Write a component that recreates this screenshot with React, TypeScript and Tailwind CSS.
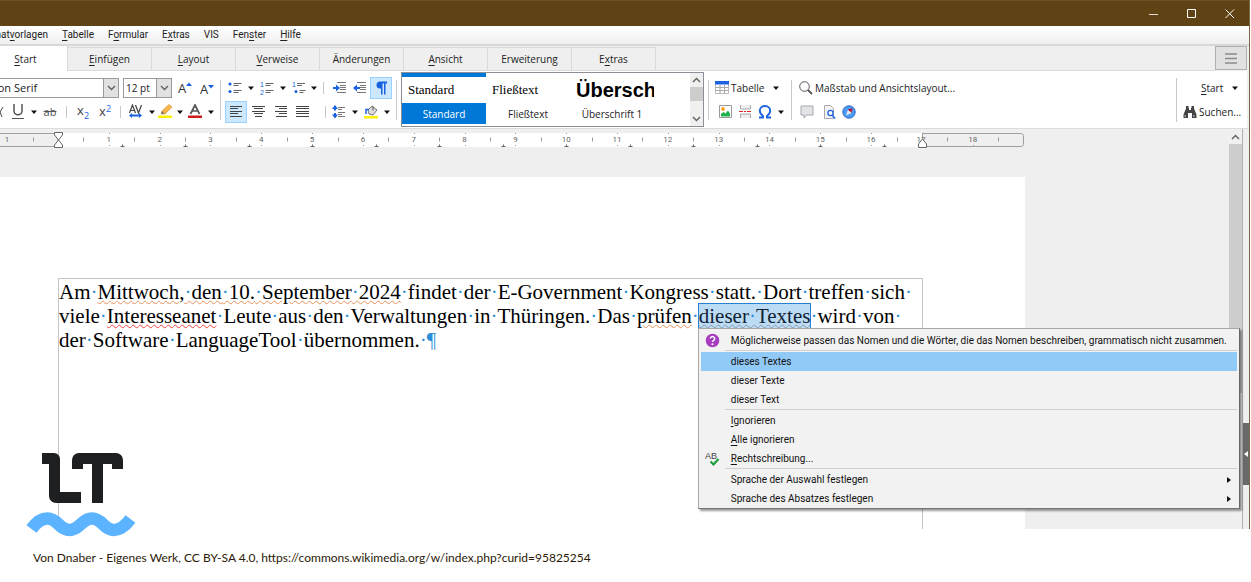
import React from 'react'
import clsx from 'clsx'

const MENU_ITEMS = ['&Tabelle', 'F&ormular', 'E&xtras', 'VIS', 'Fen&ster', '&Hilfe']

const TABS = ['&Start', '&Einfügen', '&Layout', '&Verweise', 'Änderungen', '&Ansicht', 'Erweiterung', 'E&xtras']

const CM = 50.82
const RULER_ZERO = 58

// Underlines the letter that follows the ampersand
function Mnemonic({ text }: { text: string }) {
  const at = text.indexOf('&')
  if (at < 0) return <>{text}</>
  return (
    <>
      {text.slice(0, at)}
      <span className="underline underline-offset-2">{text[at + 1]}</span>
      {text.slice(at + 2)}
    </>
  )
}

interface ToolProps {
  label: string
  className?: string
  active?: boolean
  children?: React.ReactNode
}

function Tool({ label, className = 'w-5', active, children }: ToolProps) {
  return (
    <button
      type="button"
      aria-label={label}
      className={clsx(
        'flex h-[22px] shrink-0 items-center justify-center',
        active && 'border border-[#99d1ff] bg-[#cce8ff]',
        className
      )}
    >
      {children}
    </button>
  )
}

function Caret({ className = 'w-3' }: { className?: string }) {
  return (
    <button type="button" aria-label="Mehr" className={clsx('flex h-[22px] shrink-0 items-center justify-center', className)}>
      <svg width="6" height="4" viewBox="0 0 6 4">
        <path d="M0 0.5h6L3 4z" fill="#111" />
      </svg>
    </button>
  )
}

function Divider({ className = 'h-14' }: { className?: string }) {
  return <div className={clsx('w-px shrink-0 bg-[#c8c8c8]', className)} />
}

function Chevron({ up }: { up?: boolean }) {
  return (
    <svg width="9" height="6" viewBox="0 0 9 6" fill="none" stroke="#606060" strokeWidth="1.4">
      <path d={up ? 'M1 5l3.5-3.5L8 5' : 'M1 1l3.5 3.5L8 1'} />
    </svg>
  )
}

function ListIcon({ kind }: { kind: 'bullet' | 'number' | 'outline' }) {
  return (
    <svg width="14" height="14" viewBox="0 0 14 14">
      {kind === 'bullet' && (
        <g fill="#1b62e0">
          <circle cx="2" cy="3" r="1.6" />
          <circle cx="2" cy="10.5" r="1.6" />
        </g>
      )}
      {kind === 'number' && (
        <g fill="#1b62e0" fontFamily="Liberation Sans" fontSize="7">
          <text x="0" y="6">1</text>
          <text x="0" y="13.5">2</text>
        </g>
      )}
      {kind === 'outline' && (
        <g fill="#1b62e0" fontFamily="Liberation Sans" fontSize="7">
          <text x="0" y="6">1</text>
          <circle cx="4" cy="10.5" r="1.5" />
        </g>
      )}
      <path
        d={kind === 'outline' ? 'M5 2.500h8M5 4.500h5M7.500 9.500h6M7.500 11.500h4' : 'M5.500 2.500h8M5.500 4.500h5M5.500 9.500h8M5.500 11.500h5'}
        stroke="#666"
        strokeWidth="1"
      />
    </svg>
  )
}

function IndentIcon({ flip }: { flip?: boolean }) {
  return (
    <svg width="14" height="12" viewBox="0 0 14 12">
      <path d="M4 0.500h9M7 3.500h6M7 5.500h6M7 7.500h6M4 10.500h9" stroke="#777" />
      <path d={flip ? 'M0 6l4-3.500v2.500h3v2h-3v2.500z' : 'M7 6L3 2.500V5H0v2h3v2.500z'} fill="#1b62e0" />
    </svg>
  )
}

function AlignIcon({ d }: { d: string }) {
  return (
    <svg width="13" height="12" viewBox="0 0 13 12" stroke="#444">
      <path d={d} />
    </svg>
  )
}

function FontGroup() {
  return (
    <div className="flex w-[220px] shrink-0 flex-col gap-[2px] overflow-hidden">
      <div className="flex h-[22px] items-center">
        <div className="relative -ml-12 w-[167px] shrink-0">
          <select
            aria-label="Schriftart"
            className="block h-5 w-full appearance-none border border-[#9a9a9a] bg-white pl-1.5 text-[11px] leading-4 text-[#222]"
          >
            <option>Liberation Serif</option>
          </select>
          <span className="pointer-events-none absolute inset-y-0 right-0 flex w-4 items-center justify-center border border-[#9a9a9a] bg-[#e1e1e1]">
            <Chevron />
          </span>
        </div>
        <div className="relative ml-1 w-[49px] shrink-0">
          <select
            aria-label="Schriftgröße"
            className="block h-5 w-full appearance-none border border-[#9a9a9a] bg-white pl-0.5 text-[10px] leading-4 text-[#222]"
          >
            <option>12 pt</option>
          </select>
          <span className="pointer-events-none absolute inset-y-0 right-0 flex w-4 items-center justify-center border border-[#9a9a9a] bg-[#e1e1e1]">
            <Chevron />
          </span>
        </div>
        <Tool label="Schrift vergrößern" className="ml-0.5 w-[22px]">
          <svg width="15" height="20" viewBox="0 0 15 20">
            <text x="0" y="15" fontFamily="Open Sans" fontSize="13" fill="#333">A</text>
            <path d="M8 8l3-3.500 3 3.500z" fill="#1b62e0" />
          </svg>
        </Tool>
        <Tool label="Schrift verkleinern" className="w-[22px]">
          <svg width="15" height="20" viewBox="0 0 15 20">
            <text x="0" y="16" fontFamily="Open Sans" fontSize="13" fill="#333">A</text>
            <path d="M8 7l3 3.500 3-3.500z" fill="#1b62e0" />
          </svg>
        </Tool>
      </div>
      <div className="flex h-[22px] items-center">
        <Tool label="Kursiv" className="w-2">
          <svg width="8" height="12" viewBox="0 0 8 12" fill="none" stroke="#444">
            <path d="M3 1L0 6l2 5M0 1" />
          </svg>
        </Tool>
        <Tool label="Unterstreichen">
          <svg width="12" height="15" viewBox="0 0 12 15" fill="none" stroke="#555">
            <path d="M2 0v7a4 3.800 0 0 0 8 0V0" strokeWidth="1.500" />
            <path d="M0 14.500h12" />
          </svg>
        </Tool>
        <Caret />
        <Tool label="Durchstreichen">
          <span className="text-[11px] leading-4 text-[#555] line-through">ab</span>
        </Tool>
        <Divider className="mx-1.5 h-3" />
        <Tool label="Tiefgestellt" className="w-[22px]">
          <svg width="14" height="20" viewBox="0 0 14 20" fontFamily="Open Sans">
            <text x="0" y="13" fontSize="13" fill="#444">x</text>
            <text x="7" y="17" fontSize="9" fill="#1b62e0">2</text>
          </svg>
        </Tool>
        <Tool label="Hochgestellt" className="w-[22px]">
          <svg width="14" height="20" viewBox="0 0 14 20" fontFamily="Open Sans">
            <text x="0" y="14" fontSize="13" fill="#444">x</text>
            <text x="7" y="10" fontSize="9" fill="#1b62e0">2</text>
          </svg>
        </Tool>
        <Divider className="ml-[3px] mr-1 h-3" />
        <Tool label="Zeichenabstand" className="w-[22px]">
          <svg width="15" height="15" viewBox="0 0 15 15">
            <path d="M0.500 9L3.500 1L6.500 9M1.500 6.500h4M6.500 1l3 8 3-8" fill="none" stroke="#444" strokeWidth="1.200" />
            <path d="M0 11.500l3-2.500v1.500h7V9l3 2.500-3 2.500v-1.500H3V14z" fill="#1b62e0" />
          </svg>
        </Tool>
        <Caret className="w-2.5" />
        <Tool label="Texthervorhebung" className="w-[18px]">
          <svg width="16" height="15" viewBox="0 0 16 15">
            <path d="M3 10l1-3 7-6.500 3 2.500-7 7z" fill="#f7b64b" stroke="#d58a1c" strokeWidth="0.600" />
            <path d="M3 10l1-3 2.500 2.500z" fill="#777" />
            <path d="M0 11.500h14v2.500H0z" fill="#fbf005" />
          </svg>
        </Tool>
        <Caret className="w-2.5" />
        <Tool label="Schriftfarbe">
          <svg width="16" height="15" viewBox="0 0 16 15">
            <path d="M3.500 10L8 1l4.500 9M5 7h6" fill="none" stroke="#555" strokeWidth="1.700" />
            <path d="M1 11.500h14v2.500H1z" fill="#cc1c1c" />
          </svg>
        </Tool>
        <Caret />
      </div>
    </div>
  )
}

function ParagraphGroup() {
  return (
    <div className="flex w-[175px] shrink-0 flex-col gap-[2px] pl-1">
      <div className="flex h-[22px] items-center">
        <Tool label="Aufzählung"><ListIcon kind="bullet" /></Tool>
        <Caret />
        <Tool label="Nummerierung"><ListIcon kind="number" /></Tool>
        <Caret />
        <Tool label="Gliederung"><ListIcon kind="outline" /></Tool>
        <Caret className="w-2.5" />
        <Divider className="ml-1 mr-1.5 h-3" />
        <Tool label="Einzug vergrößern"><IndentIcon /></Tool>
        <Tool label="Einzug verkleinern"><IndentIcon flip /></Tool>
        <Tool label="Formatierungszeichen" active className="w-[22px]">
          <svg width="12" height="14" viewBox="0 0 12 14">
            <path d="M5 0.500h7v2h-1.500V13.500h-1.500V2.500h-1.500V13.500H6V7.500H5a3.500 3.500 0 0 1 0-7z" fill="#1b62e0" />
          </svg>
        </Tool>
      </div>
      <div className="flex h-[22px] items-center">
        <Tool label="Linksbündig" active className="w-[22px]"><AlignIcon d="M0 .5h12M0 2.500h8M0 5.500h12M0 7.500h8M0 10.500h12" /></Tool>
        <Tool label="Zentriert" className="w-[22px]"><AlignIcon d="M0 .5h13M2 2.500h9M0 5.500h13M2 7.500h9M3 10.500h7" /></Tool>
        <Tool label="Rechtsbündig" className="w-[22px]"><AlignIcon d="M1 .5h12M5 2.500h8M1 5.500h12M5 7.500h8M2 10.500h11" /></Tool>
        <Tool label="Blocksatz" className="w-[22px]"><AlignIcon d="M0 .5h13M0 2.500h13M0 5.500h13M0 7.500h13M0 10.500h13" /></Tool>
        <Divider className="ml-3 mr-[3px] h-3" />
        <Tool label="Zeilenabstand">
          <svg width="14" height="14" viewBox="0 0 14 14">
            <path d="M3 0l3 4H4v1.500H2V4H0zM3 13.500l3-4H4V8H2v1.500H0z" fill="#1b62e0" />
            <path d="M6 2.500h7M6 4.500h4M6 7.500h7M6 9.500h4M6 11.500h7" stroke="#777" />
          </svg>
        </Tool>
        <Caret />
        <Tool label="Hintergrundfarbe">
          <svg width="15" height="14" viewBox="0 0 15 14">
            <path d="M4 5l4-4 5 4-4 5-4-1z" fill="#ddd" stroke="#777" />
            <path d="M2 9V4.500h3" fill="none" stroke="#1b62e0" strokeWidth="1.500" />
            <path d="M9 1.500v4" stroke="#555" />
            <path d="M0 11h14v2.500H0z" fill="#fbf005" />
          </svg>
        </Tool>
        <Caret />
      </div>
    </div>
  )
}

function StyleGallery() {
  return (
    <div className="ml-1 flex h-[55px] w-[303px] shrink-0 border border-[#8a8f98] bg-white">
      <button type="button" className="flex w-[84px] shrink-0 flex-col border-t-4 border-[#0078d7] text-left">
        <span className="flex h-[26px] w-full items-center pl-1.5 font-['Liberation_Serif',serif] text-[13px] text-black">Standard</span>
        <span className="flex h-[21px] w-full items-center justify-center bg-[#0078d7] text-white">Standard</span>
      </button>
      <button type="button" className="flex w-[84px] shrink-0 flex-col pt-1 text-left">
        <span className="flex h-[26px] w-full items-center pl-1.5 font-['Liberation_Serif',serif] text-[13px] text-black">Fließtext</span>
        <span className="flex h-[21px] w-full items-center justify-center">Fließtext</span>
      </button>
      <button type="button" className="flex w-[84px] shrink-0 flex-col pt-1 text-left">
        <span className="flex h-[26px] w-full items-center overflow-hidden pl-1.5 font-['Liberation_Sans',sans-serif] text-[20px] font-bold text-black">
          Übersch
        </span>
        <span className="flex h-[21px] w-full items-center justify-center">Überschrift 1</span>
      </button>
      <div className="ml-auto flex w-[13px] flex-col items-center bg-[#f0f0f0]">
        <span className="flex h-3.5 items-center"><Chevron up /></span>
        <span className="h-3.5 w-full bg-[#cdcdcd]" />
        <span className="mt-auto flex h-3.5 items-center"><Chevron /></span>
      </div>
    </div>
  )
}

function InsertGroup() {
  return (
    <div className="flex w-[82px] shrink-0 flex-col gap-[2px] pl-1.5">
      <div className="flex h-[22px] items-center">
        <button type="button" className="flex items-center gap-0.5">
          <svg width="14" height="13" viewBox="0 0 14 13">
            <path d="M0.500 0.500h13v12h-13z" fill="#fff" stroke="#bbb" />
            <path d="M0 0h14v3.500H0z" fill="#1b62e0" />
            <path d="M0 6.500h14M0 9.500h14M5 3.500V13M9.500 3.500V13" stroke="#aaa" />
          </svg>
          Tabelle
        </button>
        <Caret className="ml-auto mr-3" />
      </div>
      <div className="flex h-[22px] items-center">
        <Tool label="Bild">
          <svg width="13" height="13" viewBox="0 0 13 13">
            <path d="M0.500 0.500h12v12h-12z" fill="#fff" stroke="#999" />
            <circle cx="4" cy="4" r="1.900" fill="#f5a623" />
            <path d="M2 11.500V9l2.500-2 2 1.500L9 5.500l2 3v3z" fill="#1eb14b" />
          </svg>
        </Tool>
        <Tool label="Seitenumbruch">
          <svg width="13" height="13" viewBox="0 0 13 13">
            <path d="M1.500 0v4h10V0M1.500 13V9h10v4" fill="#eee" stroke="#aaa" />
            <path d="M0 6.500h13" stroke="#d22" strokeDasharray="4 1 2 1" />
          </svg>
        </Tool>
        <Tool label="Sonderzeichen">
          <svg width="14" height="14" viewBox="0 0 14 14">
            <path d="M1 12.500h4v-1.500C3 9.500 1.800 8 1.800 5.800a5.200 4.800 0 0 1 10.400 0C12.200 8 11 9.500 9 11v1.500h4" fill="none" stroke="#1b62e0" strokeWidth="1.900" />
          </svg>
        </Tool>
        <Caret />
      </div>
    </div>
  )
}

function ViewGroup() {
  return (
    <div className="flex shrink-0 flex-col gap-[2px] pl-[7px]">
      <div className="flex h-[22px] items-center">
        <button type="button" className="flex items-center gap-0.5">
          <svg width="14" height="14" viewBox="0 0 14 14" fill="none" stroke="#555">
            <circle cx="5.500" cy="5.500" r="4.800" />
            <path d="M9 9l4 4" strokeWidth="1.800" />
          </svg>
          Maßstab und Ansichtslayout...
        </button>
      </div>
      <div className="flex h-[22px] items-center">
        <Tool label="Kommentar" className="w-4">
          <svg width="14" height="14" viewBox="0 0 14 14">
            <path d="M1 1h12v9H6.500L4 13v-3H1z" fill="#e3e4e8" stroke="#a6a8ad" strokeLinejoin="round" />
          </svg>
        </Tool>
        <Tool label="Druckvorschau" className="ml-1 w-5">
          <svg width="13" height="14" viewBox="0 0 13 14">
            <path d="M1.500 0.500h6l3 3v10h-9z" fill="#f2f2f4" stroke="#aaa" />
            <circle cx="7.500" cy="8" r="2.600" fill="#fff" stroke="#1b62e0" strokeWidth="1.300" />
            <path d="M9.500 10.500l2.500 3" stroke="#1b62e0" strokeWidth="1.600" />
          </svg>
        </Tool>
        <Tool label="Navigator">
          <svg width="14" height="14" viewBox="0 0 14 14">
            <circle cx="7" cy="7" r="6.200" fill="#4d9bf5" stroke="#2a66c4" />
            <path d="M10.500 3.500L9.500 8 6 4.500z" fill="#d01f2e" />
            <path d="M6 4.500L9.500 8 4 10.500z" fill="#e8e8ec" />
            <path d="M10.500 3.500L6 4.500l1.700 1.700z" fill="#a3122a" />
          </svg>
        </Tool>
      </div>
    </div>
  )
}

function SearchGroup() {
  return (
    <div className="flex w-[70px] shrink-0 flex-col gap-[2px] pl-1.5">
      <div className="flex h-[22px] items-center pl-[18px]">
        <button type="button"><Mnemonic text="&Start" /></button>
        <Caret className="ml-auto w-6" />
      </div>
      <div className="flex h-[22px] items-center">
        <button type="button" className="flex items-center gap-0.5">
          <svg width="14" height="12" viewBox="0 0 14 12" fill="#444">
            <path d="M3 0h2.500v2H6v2h2V2h.5V0H11v2.500l2.500 6V12H9V7H5v5H.5V8.500l2.500-6z" />
            <path d="M1.500 9h1.500v2H1.500zM10 9h1.500v2H10z" fill="#999" />
          </svg>
          Suchen...
        </button>
      </div>
    </div>
  )
}

function Ruler() {
  const cms = Array.from({ length: 18 }, (_, i) => i + 1)
  return (
    <svg className="block" width="1026" height="17" viewBox="0 0 1026 17" role="img" aria-label="Lineal">
      <path d="M0 1h1024v14H0z" fill="#fff" />
      <path d="M-2 1.500h60v13H-2zM922.500 1.500h99a2 2 0 0 1 2 2v9a2 2 0 0 1-2 2h-99z" fill="#efefef" stroke="#a0a0a0" />
      <g fontFamily="Roboto" fontSize="8" fill="#666" textAnchor="middle">
        <text x="7" y="10">1</text>
        {cms.map((n) => (
          <text key={n} x={RULER_ZERO + n * CM - (n === 17 ? 1 : 0)} y="10">{n}</text>
        ))}
      </g>
      <g stroke="#999">
        <path d="M33.500 5.500v4" />
        {cms.map((n) => (
          <path key={n} d={`M${Math.round(RULER_ZERO + (n - 0.5) * CM) + 0.5} 5.500v4`} />
        ))}
        <path d={`M${Math.round(RULER_ZERO + 18.5 * CM) + 0.5} 5.500v4`} />
        {cms.map((n) => (
          <path key={n} d={`M${Math.round(RULER_ZERO + n * CM) + 0.5} 1v1m0 11v1`} />
        ))}
      </g>
      <g stroke="#666">
        {Array.from({ length: 13 }, (_, i) => Math.round(RULER_ZERO + (i + 1) * 63.5)).map((x) => (
          <path key={x} d={`M${x + 0.5} 12.500v2M${x - 1.5} 14.500h4`} />
        ))}
      </g>
      <g fill="#fff" stroke="#666">
        <path d="M54.500 0.500h8v2.500l-4 5-4-5zM58.500 8l4 5v2.500h-8V13z" />
        <path d="M922.500 7l4 5v3.500h-8V12z" />
      </g>
    </svg>
  )
}

// Words are separated by visible space marks
function Marked({ children }: { children: string }) {
  return (
    <>
      {children.split(' ').map((word, i) => (
        <React.Fragment key={i}>
          {i > 0 && <span className="text-[#2a8fd8]">·</span>}
          {word}
        </React.Fragment>
      ))}
    </>
  )
}

const STYLE_HINT = 'underline decoration-[#e5905a] decoration-wavy decoration-1 underline-offset-1'

interface MenuRowProps {
  label: string
  icon?: React.ReactNode
  selected?: boolean
  submenu?: boolean
}

function MenuRow({ label, icon, selected, submenu }: MenuRowProps) {
  return (
    <li role="none" className={clsx('flex h-[19px] items-center', selected && 'bg-[#91c9f7]')}>
      <button type="button" role="menuitem" className="flex h-full w-full items-center text-left">
        <span className="flex w-[30px] shrink-0 justify-start pl-1">{icon}</span>
        <span className="flex-1 whitespace-nowrap"><Mnemonic text={label} /></span>
        {submenu && (
          <svg className="mr-1.5" width="4" height="6" viewBox="0 0 4 6">
            <path d="M0 0l4 3-4 3z" fill="#111" />
          </svg>
        )}
      </button>
    </li>
  )
}

function MenuSeparator() {
  return <li role="separator" className="ml-6 h-0.5 border-t border-[#d0d0d0]" />
}

function ContextMenu() {
  return (
    <ul
      role="menu"
      className="absolute top-full -left-px z-10 w-[542px] border border-[#a8a8a8] border-r-[#666] border-b-[#777] bg-[#f2f2f2] px-0.5 pt-0.5 font-['Roboto',sans-serif] text-[10px] leading-4 text-[#111] shadow-[2px_2px_2px_rgba(0,0,0,0.4)]"
    >
      <MenuRow
        label="Möglicherweise passen das Nomen und die Wörter, die das Nomen beschreiben, grammatisch nicht zusammen."
        icon={
          <svg width="15" height="15" viewBox="0 0 15 15">
            <circle cx="7.500" cy="7.500" r="6.800" fill="#a83cc0" />
            <path d="M5.300 5.600a2.200 2 0 1 1 3.400 1.700c-.9.600-1.200.9-1.200 1.800" fill="none" stroke="#fff" strokeWidth="1.500" />
            <circle cx="7.500" cy="11.200" r="1" fill="#fff" />
          </svg>
        }
      />
      <MenuSeparator />
      <MenuRow label="dieses Textes" selected />
      <MenuRow label="dieser Texte" />
      <MenuRow label="dieser Text" />
      <MenuSeparator />
      <MenuRow label="&Ignorieren" />
      <MenuRow label="&Alle ignorieren" />
      <MenuRow
        label="&Rechtschreibung..."
        icon={
          <svg width="15" height="17" viewBox="0 0 15 17">
            <text x="0" y="9" fontFamily="Liberation Sans" fontSize="9" fill="#444">AB</text>
            <path d="M5.500 11.500l3 3 5-5.500" fill="none" stroke="#1e9e3c" strokeWidth="2.200" />
          </svg>
        }
      />
      <MenuSeparator />
      <MenuRow label="Sprache der Auswahl festlegen" submenu />
      <MenuRow label="Sprache des Absatzes festlegen" submenu />
    </ul>
  )
}

function DocumentText() {
  return (
    <div className="whitespace-nowrap pt-px font-['Liberation_Serif',serif] text-[21px] leading-[24px] text-black">
      <div>
        <Marked>Am </Marked>
        <span className={STYLE_HINT}><Marked>Mittwoch, den 10. September 2024</Marked></span>
        <Marked> findet der E-Government Kongress statt. Dort treffen sich </Marked>
      </div>
      <div>
        <Marked>viele </Marked>
        <span className="underline decoration-[#f04040] decoration-wavy decoration-1 underline-offset-1">Interesseanet</span>
        <Marked> Leute aus den Verwaltungen in Thüringen. Das </Marked>
        <span className={STYLE_HINT}>prüfen</span>
        <Marked> </Marked>
        <span className="relative inline-block bg-[#bcdcf5] text-[#123] outline outline-[#2a80d0]">
          <span className="underline decoration-[#8a9aa8] decoration-wavy decoration-1 underline-offset-1">
            <Marked>dieser Textes</Marked>
          </span>
          <ContextMenu />
        </span>
        <Marked> wird von </Marked>
      </div>
      <div>
        <Marked>der Software LanguageTool übernommen. </Marked>
        <span className="text-[#2a8fd8]">¶</span>
      </div>
    </div>
  )
}

function Logo() {
  return (
    <svg className="absolute -top-[77px] left-[26px]" width="110" height="86" viewBox="0 0 110 86" role="img" aria-label="LanguageTool">
      <g fill="#1d1f21">
        <path d="M16 1h12a6 6 0 0 1 6 6v33h21v11H30a7 7 0 0 1-7-7V12h-7z" />
        <path d="M46 17V8a7 7 0 0 1 7-7h37a7 7 0 0 1 7 7v9H86v-5h-9v39H66V12h-9v5z" />
      </g>
      <path
        d="M5.500 77Q13 66.500 21.500 66.500C32 66.500 33 78 43.500 78S55.500 66.500 66 66.500S77.500 78 88 78Q96 78 104.500 67"
        fill="none"
        stroke="#5cb3ff"
        strokeWidth="12.500"
      />
    </svg>
  )
}

export default function App() {
  return (
    <div className="bg-white font-['Open_Sans',sans-serif] text-[10px] leading-4 text-[#222]">
      <div className="mr-px border-r border-[#7d6742] bg-[#efefef]">
        <header className="flex h-[26px] items-center justify-end border-t border-[#6f5426] bg-[#5f4314] pr-3.5">
          <div className="flex items-center gap-7 text-white">
            <button type="button" aria-label="Minimieren">
              <svg width="10" height="10" viewBox="0 0 10 10" stroke="#e0d8cc"><path d="M0 5.500h9" /></svg>
            </button>
            <button type="button" aria-label="Maximieren">
              <svg width="10" height="10" viewBox="0 0 10 10" stroke="#fff" fill="none"><path d="M0.500 0.500h8v8h-8z" /></svg>
            </button>
            <button type="button" aria-label="Schließen">
              <svg width="10" height="10" viewBox="0 0 10 10" stroke="#fff"><path d="M0.500 0.500l8.500 8.500M9 .5L.5 9" /></svg>
            </button>
          </div>
        </header>

        <nav className="flex h-5 items-center gap-3.5 border-b-2 border-[#d8d8d8] bg-linear-to-b from-white to-[#efefef] font-['Roboto',sans-serif]">
          <div className="flex w-12 justify-end overflow-hidden">
            <a href="#vorlagen"><Mnemonic text="Format&vorlagen" /></a>
          </div>
          {MENU_ITEMS.map((item) => (
            <a key={item} href="#menu"><Mnemonic text={item} /></a>
          ))}
        </nav>

        <div className="flex h-[25px] items-end overflow-hidden">
          <div role="tablist" className="-ml-4 flex h-full">
            {TABS.map((tab, i) => (
              <button
                key={tab}
                type="button"
                role="tab"
                aria-selected={i === 0}
                className={clsx(
                  'w-[84px] border-r border-[#dadada]',
                  i === 0 ? 'bg-white' : 'mt-px border-y bg-[#efefef]'
                )}
              >
                <Mnemonic text={tab} />
              </button>
            ))}
          </div>
          <div className="h-full flex-1 border-b border-[#dadada]" />
          <button
            type="button"
            aria-label="Menü"
            className="mr-0.5 flex h-6 w-8 items-center justify-center self-start border border-[#b0b0b0] bg-[#e1e1e1]"
          >
            <svg width="12" height="11" viewBox="0 0 12 11" stroke="#8a8a8a" strokeWidth="1.500">
              <path d="M0 1h12M0 5.500h12M0 10h12" />
            </svg>
          </button>
        </div>

        <div className="mr-0.5 flex h-[57px] items-center overflow-hidden bg-white">
          <FontGroup />
          <Divider className="h-10" />
          <ParagraphGroup />
          <Divider className="h-10" />
          <StyleGallery />
          <Divider className="ml-1 h-10" />
          <InsertGroup />
          <Divider className="h-10" />
          <ViewGroup />
          <Divider className="ml-auto h-11" />
          <SearchGroup />
        </div>

        <main className="flex border-t border-[#dcdcdc]">
          <div className="min-w-0 flex-1">
            <div className="pt-[3px]">
              <Ruler />
            </div>
            <div className="mt-7 mr-[204px] bg-white pt-[101px] pr-[102px] pl-[58px]">
              <div className="min-h-[251px] border border-b-0 border-[#c4c4c4]">
                <DocumentText />
              </div>
            </div>
          </div>
          <div className="flex w-3.5 shrink-0 flex-col items-center border-r border-[#b0b0b0] bg-[#f0f0f0]">
            <span className="flex h-[15px] items-center"><Chevron up /></span>
            <span className="h-[249px] w-full bg-[#cdcdcd]" />
          </div>
          <div className="flex w-1.5 shrink-0 flex-col">
            <button
              type="button"
              aria-label="Seitenleiste"
              className="mt-[294px] flex h-[62px] w-full items-center justify-center bg-[#6a6a6a]"
            >
              <svg width="4" height="6" viewBox="0 0 4 6"><path d="M4 0v6L0 3z" fill="#fff" /></svg>
            </button>
          </div>
        </main>
      </div>

      <footer className="relative px-[33px] pt-[21px] pb-4">
        <Logo />
        <p className="font-['Lato',sans-serif] text-[12px] leading-4 text-[#2b1a08]">
          Von Dnaber - Eigenes Werk, CC BY-SA 4.0, https://commons.wikimedia.org/w/index.php?curid=95825254
        </p>
      </footer>
    </div>
  )
}
